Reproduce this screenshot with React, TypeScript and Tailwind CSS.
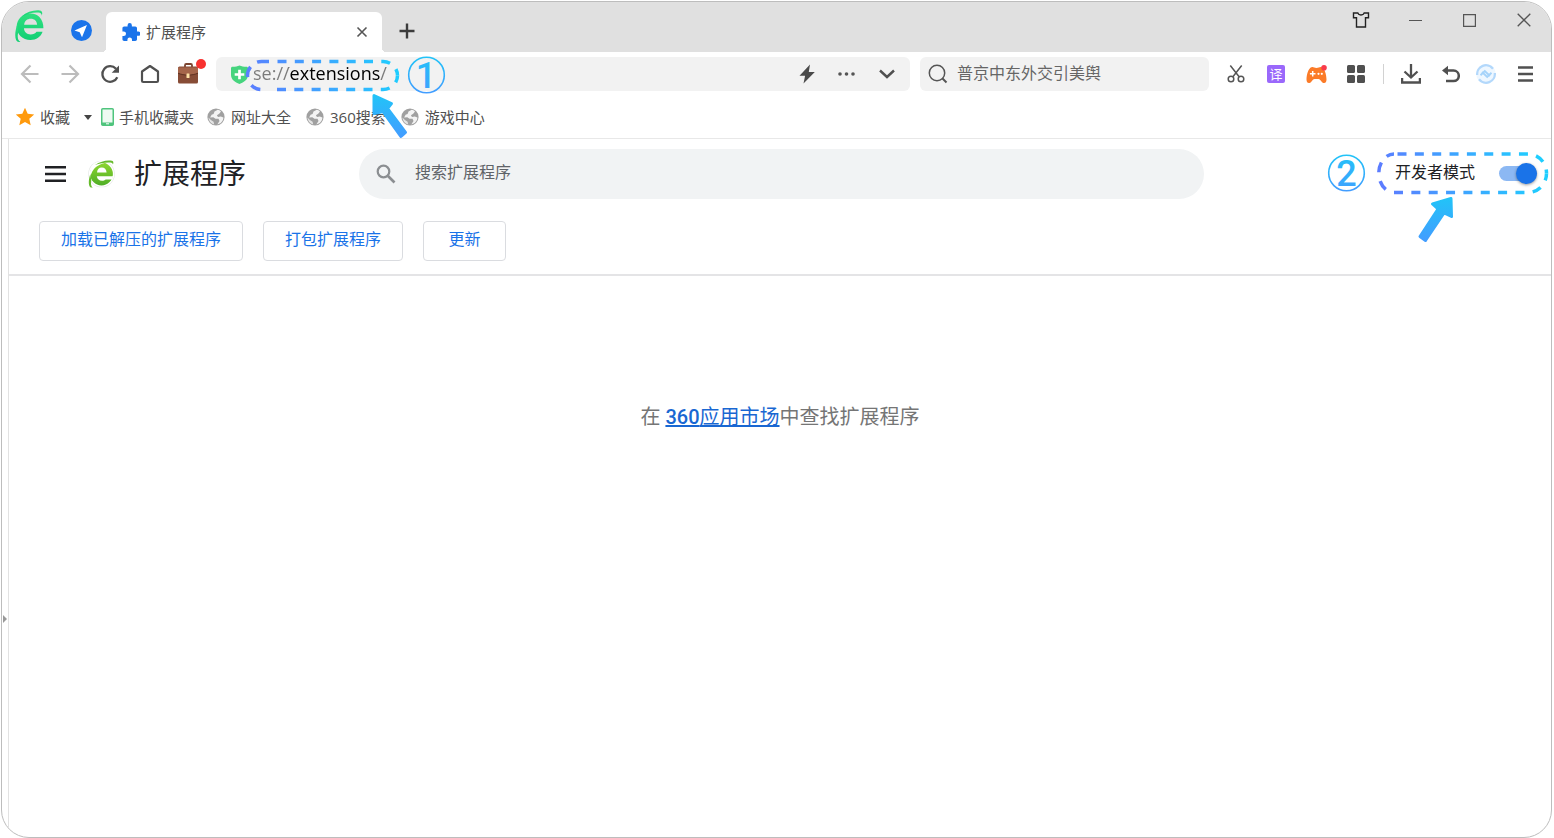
import { useState, type ReactNode } from "react"

const bookmarks = ["网址大全", "360搜索", "游戏中心"]

function IconButton({
  label,
  className = "w-10",
  children,
}: {
  label: string
  className?: string
  children: ReactNode
}) {
  return (
    <button
      aria-label={label}
      className={`flex h-9 shrink-0 cursor-pointer items-center justify-center ${className}`}
      type="button"
    >
      {children}
    </button>
  )
}

function BrowserLogo() {
  return (
    <svg aria-hidden="true" className="h-[33px] w-[29px]" viewBox="0 0 28 32">
      <defs>
        <linearGradient id="logo-main" x1="0" x2="0" y1="0" y2="1">
          <stop offset="0" stopColor="#2fe07f" />
          <stop offset="1" stopColor="#12cf74" />
        </linearGradient>
      </defs>
      <g fill="url(#logo-main)">
        <path
          d="M27.500 17.800H8.600c.4 3.900 2.900 6 6.400 6 2.600 0 4.500-.9 5.800-2.600h5.900C25 26 20.600 29.200 14.900 29.200 7.300 29.200 1.600 23.600 1.600 16.300S7.300 3.400 14.900 3.400c7.600 0 12.700 5.600 12.600 14.400ZM8.800 14.300h12.600C21 10.600 18.700 8.600 15.200 8.600s-5.900 2-6.400 5.700Z"
          fillRule="evenodd"
        />
        <path d="M6 6.500C11.500 1.800 18.500-.3 24 .5c2.400.4 2.800 2.300 1.900 5-.1-2-1-2.900-3.200-3.100C17 1.900 11.500 4 6 6.500Z" />
        <path d="M2.200 13.500C.3 19-.6 25.500 1 29.200c.7 1.600 2.200 2.200 4.200 1.700-2.600-1-3.100-4.900-2.200-8.900Z" />
      </g>
    </svg>
  )
}

function PageLogo() {
  return (
    <svg aria-hidden="true" className="h-[30px] w-[28px]" viewBox="0 0 28 30">
      <defs>
        <linearGradient id="logo-page" x1="0" x2="0" y1="0" y2="1">
          <stop offset="0" stopColor="#8ed62f" />
          <stop offset="1" stopColor="#4fae26" />
        </linearGradient>
      </defs>
      <circle cx="14.500" cy="15" fill="#e6e8e6" r="13.300" />
      <circle cx="14.500" cy="15" fill="#fff" r="12.700" />
      <circle cx="14.500" cy="15" fill="url(#logo-page)" r="11.400" />
      <path d="M10 13.400c.3-3 2-4.800 4.800-4.800s4.500 1.800 4.800 4.800ZM9.800 17.300h16.400l-1 3.200h-6.500c-1 .9-2.200 1.300-3.700 1.300-2.800 0-4.800-1.600-5.200-4.500Z" fill="#fff" />
      <path d="M5 6.500C12 1 20-.3 25.500 1c2 .6 1.900 3 .9 5.600-.2-1.800-.9-2.700-2.700-3C18.500 2.800 11 5.500 7 10 3 15 2.500 21.500 4 25.500c.6 1.500 1.600 2.300 3 2.600C5 29.600 2.600 29.500 1.700 27.500.3 24 1.500 17 3.200 12Z" fill="#fff" />
      <path d="M8 6C13.500 2.200 20 .8 25 1.800c1.600.4 1.600 1.800 1 3.800-.3-1.400-1.200-1.900-2.700-2.100C18.500 3 13 4.300 8 6ZM3.300 15C1.800 19.500 1.300 24.500 2.500 27.200c.6 1.300 1.700 1.700 3.300 1.200C4 27.500 3.600 24.700 4.300 21.500Z" fill="#66bb2c" />
    </svg>
  )
}

function GlobeIcon() {
  return (
    <svg aria-hidden="true" className="size-[18px]" viewBox="0 0 18 18">
      <circle cx="9" cy="9" fill="#a0a0a0" r="8.600" />
      <path
        d="M10.800 1.800 7.500 3.400 6.600 5.900 4.600 6.700 3.100 9.500l3.200-.3 2.200 1.600h3l1 2.300-2.200 3.300C13.800 15.900 16.300 13 16.400 9.500l-2.600-.9-2.800.4-1.100-1.800 2.300-1.500 1.800-2.200C13 2.600 12 2 10.800 1.800Z"
        fill="#f3f3f3"
      />
      <path d="M1.500 9.500c.2 3.300 2.500 6.200 5.700 6.900l-.6-2.600-2.700-1.700Z" fill="#e4e4e4" />
    </svg>
  )
}

function TitleBar() {
  return (
    <header className="flex h-[50px] items-end bg-[#e0e0e0]">
      <div className="flex h-[50px] w-[104px] shrink-0 items-start pl-3">
        <span className="mt-2 flex w-[30px] justify-center">
          <BrowserLogo />
        </span>
        <button aria-label="导航" className="mt-[18px] ml-[27px] cursor-pointer" type="button">
          <svg aria-hidden="true" className="size-[21px]" viewBox="0 0 20 20">
            <circle cx="10" cy="10" fill="#1b74ea" r="10" />
            <path d="M15.200 4.800 3.300 9.900l5 1.800 2.200 4.800Z" fill="#fff" />
          </svg>
        </button>
      </div>

      <div className="relative flex h-10 w-[276px] shrink-0 items-center rounded-t-md bg-white pr-3 pl-4 before:absolute before:bottom-0 before:-left-1 before:size-1 before:bg-[radial-gradient(circle_at_top_left,#e0e0e0_4px,white_4px)] after:absolute after:-right-1 after:bottom-0 after:size-1 after:bg-[radial-gradient(circle_at_top_right,#e0e0e0_4px,white_4px)]">
        <svg aria-hidden="true" className="size-[18px]" viewBox="1.500 1 21 21">
          <path
            d="M20.500 11H19V7c0-1.100-.9-2-2-2h-4V3.500a2.500 2.500 0 0 0-5 0V5H4c-1.100 0-2 .9-2 2v3.800h1.500a2.700 2.700 0 0 1 0 5.400H2V20c0 1.100.9 2 2 2h3.800v-1.500a2.700 2.700 0 0 1 5.400 0V22H17c1.100 0 2-.9 2-2v-4h1.500a2.500 2.500 0 0 0 0-5Z"
            fill="#1b74ea"
          />
        </svg>
        <span className="ml-1.5 text-[15px] text-[#505050]">扩展程序</span>
        <button aria-label="关闭标签页" className="ml-auto flex size-4 cursor-pointer items-center justify-center" type="button">
          <svg aria-hidden="true" className="size-3" viewBox="0 0 12 12">
            <path d="m1.500 1.500 9 9m0-9-9 9" fill="none" stroke="#555" strokeWidth="1.600" />
          </svg>
        </button>
      </div>

      <button aria-label="新建标签页" className="ml-[17px] flex h-[43px] cursor-pointer items-center" type="button">
        <svg aria-hidden="true" className="size-4" viewBox="0 0 16 16">
          <path d="M8 .5v15M.5 8h15" stroke="#3c3c3c" strokeWidth="2.400" />
        </svg>
      </button>

      <div className="ml-auto flex h-[50px] items-start">
        <IconButton className="w-[54px]" label="皮肤">
          <svg aria-hidden="true" className="size-[18px]" viewBox="0 0 18 18">
            <path
              d="M1.500 2h4.300c.5 1.500 1.700 2 3.200 2s2.700-.5 3.200-2h4.300v4.800h-3V16h-9V6.800h-3Z"
              fill="none"
              stroke="#222"
              strokeWidth="1.400"
            />
          </svg>
        </IconButton>
        <IconButton className="w-[54px]" label="最小化">
          <svg aria-hidden="true" className="size-[13px]" viewBox="0 0 13 13">
            <path d="M0 6.500h13" stroke="#555" strokeWidth="1.200" />
          </svg>
        </IconButton>
        <IconButton className="w-[54px]" label="最大化">
          <svg aria-hidden="true" className="size-[13px]" viewBox="0 0 13 13">
            <path d="M.6.6h11.800v11.800H.6Z" fill="none" stroke="#555" strokeWidth="1.200" />
          </svg>
        </IconButton>
        <IconButton className="w-[55px]" label="关闭">
          <svg aria-hidden="true" className="size-[14px]" viewBox="0 0 14 14">
            <path d="m.7.7 12.600 12.600m0-12.600L.7 13.300" stroke="#555" strokeWidth="1.300" />
          </svg>
        </IconButton>
      </div>
    </header>
  )
}

function AddressHint() {
  return (
    <svg
      aria-label="第一步:打开扩展程序地址"
      className="pointer-events-none absolute top-[-3px] left-7 z-10 h-[88px] w-[206px]"
      role="img"
      viewBox="244 54 206 88"
    >
      <defs>
        <linearGradient gradientUnits="userSpaceOnUse" id="dash-a" x1="250" x2="396" y1="100" y2="60">
          <stop offset="0" stopColor="#5c7cff" />
          <stop offset="1" stopColor="#1fceff" />
        </linearGradient>
        <linearGradient id="fill-a" x1="0" x2="0" y1="0" y2="1">
          <stop offset="0" stopColor="#22c3f8" />
          <stop offset="1" stopColor="#429dff" />
        </linearGradient>
      </defs>
      <g fill="none" stroke="url(#dash-a)" strokeDasharray="9 8.300" strokeWidth="3.500">
        <path d="M277.500 61.500H383a14.500 14 0 0 1 14.500 14" />
        <path d="M277 89.500H383a14.500 14 0 0 0 14.500-14" />
        <path d="M269 61.500H261.500a14 14 0 0 0 0 28H269" strokeDasharray="12 8 11 9 10 30" />
      </g>
      <circle cx="426.500" cy="75" fill="none" r="17.800" stroke="url(#fill-a)" strokeWidth="1.600" />
      <text
        className="font-['Roboto'] text-[36px] font-medium"
        fill="url(#fill-a)"
        textAnchor="middle"
        x="426"
        y="88"
      >
        1
      </text>
      <path
        d="M374 95.500 391.500 103.500 387.500 108.500 405.500 132.500 401 136.500 383 111.500 374 113.500Z"
        fill="url(#fill-a)"
        stroke="url(#fill-a)"
        strokeLinejoin="round"
        strokeWidth="3"
      />
    </svg>
  )
}

function DeveloperHint() {
  return (
    <svg
      aria-label="第二步:开启开发者模式"
      className="pointer-events-none absolute top-[11px] right-px z-10 h-[94px] w-[224px]"
      role="img"
      viewBox="1326 150 224 94"
    >
      <defs>
        <linearGradient gradientUnits="userSpaceOnUse" id="dash-b" x1="1385" x2="1535" y1="194" y2="154">
          <stop offset="0" stopColor="#5c7cff" />
          <stop offset="1" stopColor="#1fceff" />
        </linearGradient>
        <linearGradient id="fill-b" x1="0" x2="0" y1="0" y2="1">
          <stop offset="0" stopColor="#22c3f8" />
          <stop offset="1" stopColor="#429dff" />
        </linearGradient>
      </defs>
      <g fill="none" stroke="url(#dash-b)" strokeDasharray="9 8.350" strokeWidth="3.500">
        <path d="M1397.500 154H1528a18.500 19 0 0 1 18.500 19.500" />
        <path d="M1394 192.500H1528a18.500 19 0 0 0 18.500-19" />
        <path d="M1394 192.500a15 19 0 0 1 0-38.500" strokeDasharray="0 9 10 9 10 8 10 20" />
      </g>
      <circle cx="1346.500" cy="173" fill="none" r="17.800" stroke="url(#fill-b)" strokeWidth="1.600" />
      <text
        className="font-['Roboto'] text-[36px] font-medium"
        fill="url(#fill-b)"
        textAnchor="middle"
        x="1346.500"
        y="186"
      >
        2
      </text>
      <path
        d="M1451 198.500 1432.500 204 1438 209 1420 236.500 1425.500 240.500 1444 213 1451.500 216.500Z"
        fill="url(#fill-b)"
        stroke="url(#fill-b)"
        strokeLinejoin="round"
        strokeWidth="3"
      />
    </svg>
  )
}

function Toolbar() {
  const [address, setAddress] = useState("se://extensions/")

  return (
    <div className="flex h-11 items-center pl-2">
      <nav aria-label="浏览" className="flex shrink-0">
        <IconButton label="后退">
          <svg aria-hidden="true" className="size-5" fill="none" stroke="#bcbcbc" strokeWidth="2.200" viewBox="0 0 20 20">
            <path d="M18.500 10H2.500M10.500 1.500 2 10l8.500 8.500" />
          </svg>
        </IconButton>
        <IconButton label="前进">
          <svg aria-hidden="true" className="size-5" fill="none" stroke="#bcbcbc" strokeWidth="2.200" viewBox="0 0 20 20">
            <path d="M1.500 10h16M9.500 1.500 18 10l-8.500 8.500" />
          </svg>
        </IconButton>
        <IconButton label="刷新">
          <svg aria-hidden="true" className="size-5" viewBox="0 0 20 20">
            <path d="M17.300 13.200A7.800 7.800 0 1 1 16 4.800" fill="none" stroke="#505050" strokeWidth="2.300" />
            <path d="M19 1.500v7.300h-7.300Z" fill="#505050" />
          </svg>
        </IconButton>
        <IconButton label="主页">
          <svg aria-hidden="true" className="size-5" viewBox="0 0 20 20">
            <path
              d="M10 2 2 7.500v9.300c0 .7.500 1.200 1.200 1.200h13.600c.7 0 1.200-.5 1.200-1.200V7.500Z"
              fill="none"
              stroke="#505050"
              strokeLinejoin="round"
              strokeWidth="2.200"
            />
          </svg>
        </IconButton>
        <IconButton className="w-[38px]" label="工具箱">
          <span className="relative">
            <svg aria-hidden="true" className="size-[22px]" viewBox="0 0 22 22">
              <path d="M7 5V2.200C7 1.500 7.500 1 8.200 1h4.600c.7 0 1.200.5 1.200 1.200V5" fill="none" stroke="#7b4430" strokeWidth="1.800" />
              <rect fill="#874c36" height="17" rx="1.500" width="20" x="0" y="3.500" />
              <path d="M0 4.500h20v5.700c-6 2.500-14 2.500-20 0Z" fill="#a5654a" />
              <path d="M0 10.200c6 2.500 14 2.500 20 0" fill="none" stroke="#5e3020" />
              <rect fill="#ffe2a6" height="4.500" rx=".6" width="3" x="8.500" y="10.500" />
            </svg>
            <span className="absolute -top-1 -right-1.5 size-[10px] rounded-full bg-[#f8312f]" />
          </span>
        </IconButton>
      </nav>

      <form className="relative ml-2 flex h-[34px] min-w-0 flex-1 items-center rounded-md bg-[#f2f2f2] pr-[3px] pl-[15px]">
        <svg aria-hidden="true" className="h-[19px] w-[17px] shrink-0" viewBox="0 0 17 19">
          <path d="M1.500 1.800C4.500 1.800 6.500 1.300 8.500.5c2 .8 4 1.300 7 1.300.8 0 1.500.5 1.500 1.500V10c0 4.500-4 7.300-8.500 9C4 17.300 0 14.500 0 10V3.300c0-1 .7-1.500 1.500-1.500Z" fill="#46d47e" />
          <path d="M8.500 4.700v9.600M3.700 9.500h9.600" stroke="#fff" strokeWidth="2.700" />
        </svg>
        <input
          aria-label="地址"
          className="ml-[5px] h-full min-w-0 flex-1 bg-[linear-gradient(90deg,#7a7a7a_36px,#000_36px,#000_127px,#7a7a7a_127px)] bg-clip-text pb-0.5 font-['Open_Sans','Noto_Sans_CJK_SC',sans-serif] text-[18px] text-transparent caret-black outline-none"
          onChange={(e) => setAddress(e.target.value)}
          value={address}
        />
        <IconButton label="极速模式">
          <svg aria-hidden="true" className="size-5" viewBox="0 0 20 20">
            <path d="M13 .5 2.500 11.800h5.600L6.500 19.500 17.800 8h-6Z" fill="#4a4a4a" />
          </svg>
        </IconButton>
        <IconButton label="更多">
          <svg aria-hidden="true" className="h-1 w-[18px]" fill="#555" viewBox="0 0 18 4">
            <circle cx="2" cy="2" r="1.800" />
            <circle cx="8.500" cy="2" r="1.800" />
            <circle cx="15" cy="2" r="1.800" />
          </svg>
        </IconButton>
        <IconButton label="历史地址">
          <svg aria-hidden="true" className="h-[10px] w-4" viewBox="0 0 16 10">
            <path d="m1 1.500 7 6.500 7-6.500" fill="none" stroke="#505050" strokeWidth="2.400" />
          </svg>
        </IconButton>
        <AddressHint />
      </form>

      <form className="ml-[10px] flex h-[34px] w-[289px] shrink-0 items-center rounded-md bg-[#f2f2f2] pl-2">
        <svg aria-hidden="true" className="size-5 shrink-0" viewBox="0 0 20 20">
          <circle cx="9" cy="9" fill="none" r="7.700" stroke="#555" strokeWidth="1.500" />
          <path d="m14.500 14.500 4 4" stroke="#555" strokeWidth="2" />
        </svg>
        <input
          aria-label="搜索"
          className="ml-[9px] h-full min-w-0 flex-1 bg-transparent pb-0.5 text-[16px] outline-none placeholder:text-[#666]"
          placeholder="普京中东外交引美舆"
        />
      </form>

      <div className="ml-[7px] flex shrink-0 items-center pr-px">
        <IconButton label="截图">
          <svg aria-hidden="true" className="size-[18px]" fill="none" stroke="#555" strokeWidth="1.500" viewBox="0 0 18 18">
            <circle cx="4" cy="14" r="2.800" />
            <circle cx="14" cy="14" r="2.800" />
            <path d="M3.300.5 12.300 12M14.700.5 5.700 12" />
          </svg>
        </IconButton>
        <IconButton label="翻译">
          <span className="flex size-[18px] items-center justify-center rounded-xs bg-[#9a68fb] text-[13px] leading-none text-white">
            译
          </span>
        </IconButton>
        <IconButton label="游戏">
          <svg aria-hidden="true" className="h-[19px] w-[21px]" viewBox="0 0 21 19">
            <path
              d="M5.500 2.200c1.800-.6 2.800.8 5 .8s3.200-1.400 5-.8c3.200 1 5 7.500 5 12.300 0 4-3 4.500-5 2-1.200-1.500-1.800-2.500-3-2.500h-4c-1.200 0-1.800 1-3 2.500-2 2.500-5 2-5-2C.5 9.700 2.300 3.200 5.500 2.200Z"
              fill="#fb7b28"
            />
            <path d="M6.700 6v5.600M3.900 8.800h5.600" stroke="#fff" strokeWidth="1.500" />
            <circle cx="12.500" cy="8.800" fill="#fff" r="1.100" />
            <circle cx="15.800" cy="8.800" fill="#fff" r="1.100" />
            <circle cx="18" cy="2.800" fill="#f93b4b" r="2.800" />
          </svg>
        </IconButton>
        <IconButton label="应用">
          <svg aria-hidden="true" className="size-[18px]" fill="#505050" viewBox="0 0 18 18">
            <rect height="8" rx="1.500" width="8" />
            <rect height="8" rx="1.500" width="8" x="10" />
            <rect height="8" rx="1.500" width="8" y="10" />
            <rect height="8" rx="1.500" width="8" x="10" y="10" />
          </svg>
        </IconButton>
        <span className="mx-[7px] h-5 w-px bg-[#d2d2d2]" />
        <IconButton label="下载">
          <svg aria-hidden="true" className="size-5" fill="none" stroke="#505050" strokeWidth="2.300" viewBox="0 0 20 20">
            <path d="M10 0v13M3.500 7.500l6.500 6 6.500-6M1.100 14v4.500h17.800V14" />
          </svg>
        </IconButton>
        <IconButton label="恢复页面">
          <svg aria-hidden="true" className="size-[18px]" viewBox="0 0 18 18">
            <path d="M3 5.500h8.500a5.300 5.300 0 0 1 0 10.600H4" fill="none" stroke="#505050" strokeWidth="2.500" />
            <path d="M6 .8v9.400L0 5.500Z" fill="#505050" />
          </svg>
        </IconButton>
        <IconButton className="w-[30px]" label="同步">
          <svg aria-hidden="true" className="size-5" viewBox="0 0 20 20">
            <circle cx="10" cy="10" fill="#eef7ff" r="9.800" />
            <path d="M1.200 11A8.800 8.800 0 0 1 17 4.800M18.800 9A8.800 8.800 0 0 1 3 15.200" fill="none" stroke="#b3d8fb" strokeWidth="2.300" />
            <path d="M4.500 11.200 8.800 7l5.200 5M15.500 8.800 11.200 13 6 8" fill="none" stroke="#a5d3fa" strokeWidth="1.900" />
          </svg>
        </IconButton>
        <IconButton className="w-[49px]" label="菜单">
          <svg aria-hidden="true" className="h-4 w-[15px]" stroke="#505050" strokeWidth="2.300" viewBox="0 0 15 16">
            <path d="M0 1.500h15M0 8h15M0 14.500h15" />
          </svg>
        </IconButton>
      </div>
    </div>
  )
}

function BookmarkBar() {
  return (
    <nav
      aria-label="收藏栏"
      className="flex h-[43px] items-center border-b border-[#e8e8e8] pl-[13px] text-[15px] text-[#505050]"
    >
      <button className="flex cursor-pointer items-center" type="button">
        <svg aria-hidden="true" className="size-5" viewBox="0 0 20 20">
          <path d="m10 .8 2.700 6 6.500.7-4.900 4.300 1.400 6.500L10 15l-5.700 3.300 1.400-6.500L.8 7.500l6.500-.7Z" fill="#ff9a0d" />
        </svg>
        <span className="ml-[5px]">收藏</span>
        <svg aria-hidden="true" className="ml-[14px] h-[5px] w-2" viewBox="0 0 8 5">
          <path d="M0 0h8L4 5Z" fill="#444" />
        </svg>
      </button>
      <a className="ml-[9px] flex items-center gap-[5px]" href="#mobile">
        <svg aria-hidden="true" className="h-[18px] w-[13px]" viewBox="0 0 13 18">
          <rect fill="#eefaf2" height="16.500" rx="1" stroke="#4fc47d" strokeWidth="1.500" width="11.500" x=".75" y=".75" />
          <path d="M.75 14.500h11.500V17H.75Z" fill="#4fc47d" />
          <path d="M5 15.800h3" stroke="#fff" />
        </svg>
        手机收藏夹
      </a>
      <div className="ml-[13px] flex gap-[15px]">
        {bookmarks.map((name) => (
          <a className="flex items-center gap-[6px]" href="#bookmark" key={name}>
            <GlobeIcon />
            {name}
          </a>
        ))}
      </div>
    </nav>
  )
}

function ActionButton({ children }: { children: ReactNode }) {
  return (
    <button
      className="h-10 min-w-[83px] cursor-pointer rounded border border-[#dadce0] px-[21px] pb-1 text-[16px] text-[#1a73e8]"
      type="button"
    >
      {children}
    </button>
  )
}

function ExtensionsPage() {
  const [devMode, setDevMode] = useState(true)

  return (
    <main className="flex min-w-0 flex-1 flex-col border-l border-[#e2e2e2]">
      <div className="relative border-b-2 border-[#e4e4e6] pb-[13px]">
        <div className="flex h-[69px] items-center">
          <div className="flex w-[350px] shrink-0 items-center pl-9">
            <button aria-label="主菜单" className="cursor-pointer" type="button">
              <svg aria-hidden="true" className="h-4 w-[21px]" stroke="#202124" strokeWidth="2.600" viewBox="0 0 21 16">
                <path d="M0 1.300h21M0 8h21M0 14.700h21" />
              </svg>
            </button>
            <span className="ml-[21px]">
              <PageLogo />
            </span>
            <h1 className="ml-[19px] pb-0.5 text-[28px] leading-9 text-[#202124]">扩展程序</h1>
          </div>
          <label className="flex h-[50px] min-w-0 flex-1 items-center rounded-full bg-[#f1f3f4] pl-4">
            <svg aria-hidden="true" className="size-[22px] shrink-0" viewBox="0 0 22 22">
              <circle cx="8.500" cy="8.500" fill="none" r="5.800" stroke="#8b8e91" strokeWidth="2.200" />
              <path d="m13 13 6.500 6.500" stroke="#8b8e91" strokeWidth="2.600" />
            </svg>
            <input
              aria-label="搜索扩展程序"
              className="ml-[18px] h-full min-w-0 flex-1 bg-transparent pb-[3px] text-[16px] outline-none placeholder:text-[#5f6368]"
              placeholder="搜索扩展程序"
              type="search"
            />
          </label>
          <div className="flex w-[347px] shrink-0 justify-end pr-[14px]">
            <label className="flex cursor-pointer items-center text-[16px] text-[#202124]">
              <span className="pb-[3px]">开发者模式</span>
              <input
                checked={devMode}
                className="peer sr-only"
                onChange={(e) => setDevMode(e.target.checked)}
                role="switch"
                type="checkbox"
              />
              <span className="relative ml-6 h-[15px] w-[38px] rounded-full bg-[#bdc1c6] before:absolute before:-top-[3px] before:left-0 before:size-[21px] before:rounded-full before:bg-white before:shadow-[0_1px_3px_rgba(0,0,0,0.4)] peer-checked:bg-[#8cb8f3] peer-checked:before:left-[17px] peer-checked:before:bg-[#1a73e8]" />
            </label>
          </div>
        </div>
        <div className="mt-[13px] flex flex-wrap gap-5 pl-[30px]">
          <ActionButton>加载已解压的扩展程序</ActionButton>
          <ActionButton>打包扩展程序</ActionButton>
          <ActionButton>更新</ActionButton>
        </div>
        <DeveloperHint />
      </div>

      <p className="pt-[127px] text-center font-['Roboto','Noto_Sans_CJK_SC',sans-serif] text-[20px] leading-7 text-[#757575]">
        在{" "}
        <a className="text-[#1967d2] underline" href="#market">
          <span className="font-medium">360</span>应用市场
        </a>
        中查找扩展程序
      </p>
    </main>
  )
}

export default function App() {
  return (
    <div className="flex min-h-screen bg-white pt-px pr-0.5 pl-px font-['Open_Sans','Noto_Sans_CJK_SC',sans-serif]">
      <div className="flex min-w-0 flex-1 flex-col overflow-hidden rounded-[28px] border border-[#bdbdbd] bg-white">
        <TitleBar />
        <Toolbar />
        <BookmarkBar />
        <div className="flex flex-1">
          <aside className="flex w-1.5 items-center">
            <button aria-label="展开侧边栏" className="mt-[262px] cursor-pointer" type="button">
              <svg aria-hidden="true" className="h-2 w-[5px]" viewBox="0 0 5 8">
                <path d="M1 0l4 4-4 4Z" fill="#999" />
              </svg>
            </button>
          </aside>
          <ExtensionsPage />
        </div>
      </div>
    </div>
  )
}
